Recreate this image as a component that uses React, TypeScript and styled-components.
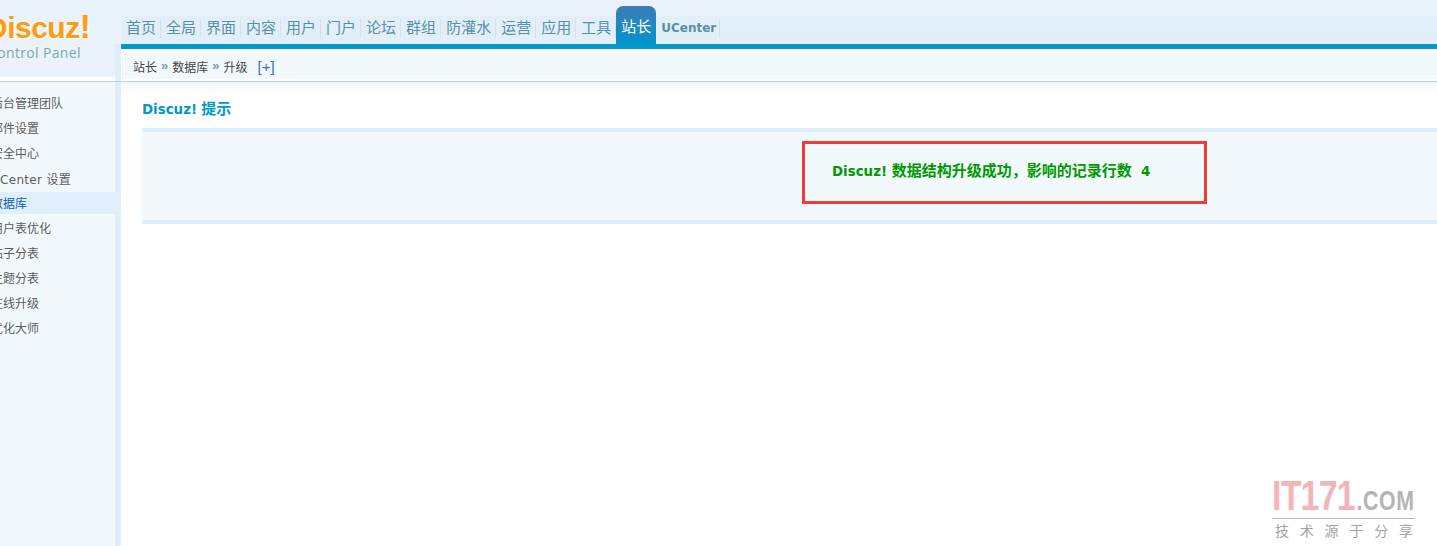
import React from 'react';
import styled, {createGlobalStyle} from 'styled-components';

const cjk = "'Noto Sans CJK SC', sans-serif";

const GlobalStyle = createGlobalStyle`
  html, body {
    margin: 0;
    padding: 0;
    background: #fff;
    overflow: hidden;
  }
  body {
    font-family: 'Liberation Sans', ${cjk};
  }
`;

const Page = styled.div`
  width: 1437px;
  height: 546px;
  display: grid;
  grid-template-columns: 121px 1fr;
  grid-template-rows: 82px 1fr;
  position: relative;
  overflow: hidden;
`;

const LogoArea = styled.div`
  position: relative;
  background: linear-gradient(#eaf3fb 0, #eaf3fb 77px, #fff 77px);
  border-bottom: 1px solid #b9d2de;
  box-sizing: border-box;
  overflow: hidden;

  &::after {
    content: '';
    position: absolute;
    top: 44px;
    right: 0;
    bottom: 0;
    width: 6px;
    background: #deeffb;
  }
`;

const LogoText = styled.div`
  margin: 11px 0 0 -14px;
  font-family: 'Liberation Sans', sans-serif;
  font-weight: 700;
  font-size: 30px;
  line-height: 34px;
  letter-spacing: -0.5px;
  color: #ff9c12;
  text-shadow: 1px 1px 1px #fff;
  white-space: nowrap;
`;

const LogoBang = styled.span`
  font-size: 33px;
  line-height: 30px;
`;

const LogoSub = styled.div`
  margin: 0 0 0 -12px;
  font-family: 'Open Sans', sans-serif;
  font-size: 14px;
  line-height: 16px;
  letter-spacing: 0.35px;
  color: #7ba6ba;
  white-space: nowrap;
`;

const TopArea = styled.div`
  display: flex;
  flex-direction: column;
  background: #fff;
  border-bottom: 1px solid #b9d2de;
  box-sizing: border-box;
`;

const Nav = styled.ul`
  list-style: none;
  margin: 0;
  padding: 0;
  height: 44px;
  box-sizing: border-box;
  display: flex;
  align-items: flex-end;
  background: linear-gradient(#eaf3fb 0, #eaf3fb 16px, #e2eff9 16px);
`;

const NavItem = styled.li<{$active?: boolean; $latin?: boolean}>`
  position: relative;
  height: ${p => (p.$active ? 38 : 28)}px;
  line-height: ${p => (p.$active ? 42 : 24)}px;
  padding: ${p => (p.$latin ? '0 4px 0 5px' : '0 5px')};
  font-family: ${p => (p.$latin ? "'DejaVu Sans', sans-serif" : 'inherit')};
  font-size: ${p => (p.$latin ? 12 : 15)}px;
  font-weight: ${p => (p.$latin ? 700 : 400)};
  color: ${p => (p.$active ? '#fff' : '#5890a8')};
  background: ${p => (p.$active ? 'linear-gradient(#3f7cb3, #0095cb)' : 'transparent')};
  border-radius: ${p => (p.$active ? '7px 7px 0 0' : 0)};
  white-space: nowrap;
  box-sizing: border-box;

  &::after {
    content: '';
    display: ${p => (p.$active ? 'none' : 'block')};
    position: absolute;
    top: 3px;
    right: 0;
    width: 1px;
    height: 19px;
    background: #d3e2ec;
  }
`;

const BlueRule = styled.div`
  height: 5px;
  background: #0099cc;
`;

const Crumbs = styled.div`
  margin: 4px 0 2px 1px;
  flex: 1;
  background: #f2f9fd;
  padding-left: 11px;
  display: flex;
  align-items: center;
  gap: 4px;
  font-size: 12px;
  color: #444;
`;

const CrumbSep = styled.span`
  color: #8494a8;
  font-size: 13px;
  font-weight: 700;
  line-height: 12px;
`;

const CrumbToggle = styled.span`
  color: #3a6fd0;
  font-size: 15px;
  margin-left: 6px;
`;

const Sidebar = styled.div`
  background: #f2f9fd;
  border-right: 6px solid #deeffb;
  box-shadow: 1px 0 0 #b9d2de;
  padding-top: 9px;
  overflow: hidden;
`;

const SideItem = styled.div<{$active?: boolean; $latin?: boolean}>`
  height: 25px;
  line-height: ${p => (p.$latin ? 29 : 27)}px;
  font-family: ${p => (p.$latin ? `'DejaVu Sans', ${cjk}` : 'inherit')};
  font-size: 12px;
  letter-spacing: ${p => (p.$latin ? '0.3px' : 0)};
  color: ${p => (p.$active ? '#0f5ea8' : '#5c5c5c')};
  background: ${p => (p.$active ? 'linear-gradient(#deeffb, #deeffb) 0 1px / 100% 22px no-repeat' : 'transparent')};
  text-indent: -9px;
  white-space: nowrap;
`;

const Main = styled.div`
  padding: 18px 0 0 21px;
  background: linear-gradient(#f0f6fa 0, #fff 12px);
`;

const Title = styled.h3`
  margin: 0;
  height: 28px;
  font-size: 15px;
  line-height: 18px;
  font-weight: 700;
  color: #0099cc;
`;

const Latin = styled.span`
  font-family: 'DejaVu Sans', sans-serif;
  font-size: 13.4px;
`;

const InfoBox = styled.div`
  height: 96px;
  box-sizing: border-box;
  border-top: 4px solid #deeffb;
  border-bottom: 4px solid #deeffb;
  background: #f2f9fd;
  padding: 9px 230px 0 660px;
`;

const Highlight = styled.div`
  width: 405px;
  height: 63px;
  box-sizing: border-box;
  border: 3px solid #f33a3a;
  padding-left: 27px;
  line-height: 53px;
  font-size: 15px;
  font-weight: 700;
  color: #009900;
  white-space: nowrap;
`;

const Watermark = styled.div`
  position: absolute;
  left: 1272px;
  top: 473px;
  width: 143px;
`;

const MarkTop = styled.div`
  height: 45px;
  border-bottom: 1px solid #b5b5b5;
  white-space: nowrap;
`;

const MarkWord = styled.div`
  display: inline-block;
  line-height: 45px;
  transform: scaleX(0.79);
  transform-origin: left center;
`;

const MarkRed = styled.span`
  font-family: 'Liberation Sans', sans-serif;
  font-weight: 700;
  font-size: 43px;
  letter-spacing: -1px;
  color: #f2b6b8;
`;

const MarkGrey = styled.span`
  font-family: 'Liberation Sans', sans-serif;
  font-weight: 700;
  font-size: 27px;
  letter-spacing: 0.8px;
  margin-left: 2px;
  color: #b4b4b4;
`;

const MarkSub = styled.div`
  display: flex;
  justify-content: space-between;
  padding: 3px 2px 0 3px;
  font-size: 14px;
  line-height: 18px;
  color: #a2a2a2;
`;

const navItems = ['首页', '全局', '界面', '内容', '用户', '门户', '论坛', '群组', '防灌水', '运营', '应用', '工具'];
const sideItems = ['后台管理团队', '邮件设置', '安全中心', 'UCenter 设置', '数据库', '用户表优化', '帖子分表', '主题分表', '在线升级', '优化大师'];

const App: React.FC = () => (
    <Page>
        <GlobalStyle/>
        <LogoArea>
            <LogoText>Discuz<LogoBang>!</LogoBang></LogoText>
            <LogoSub>Control Panel</LogoSub>
        </LogoArea>
        <TopArea>
            <Nav>
                {navItems.map(n => <NavItem key={n}>{n}</NavItem>)}
                <NavItem $active>站长</NavItem>
                <NavItem $latin>UCenter</NavItem>
            </Nav>
            <BlueRule/>
            <Crumbs>
                站长 <CrumbSep>»</CrumbSep> 数据库 <CrumbSep>»</CrumbSep> 升级 <CrumbToggle>[+]</CrumbToggle>
            </Crumbs>
        </TopArea>
        <Sidebar>
            {sideItems.map(s => (
                <SideItem key={s} $active={s === '数据库'} $latin={s.startsWith('UCenter')}>{s}</SideItem>
            ))}
        </Sidebar>
        <Main>
            <Title><Latin>Discuz!</Latin> 提示</Title>
            <InfoBox>
                <Highlight>
                    <Latin>Discuz! </Latin>数据结构升级成功，影响的记录行数<Latin>&nbsp; 4</Latin>
                </Highlight>
            </InfoBox>
        </Main>
        <Watermark>
            <MarkTop>
                <MarkWord><MarkRed>IT171</MarkRed><MarkGrey>.COM</MarkGrey></MarkWord>
            </MarkTop>
            <MarkSub>
                {['技', '术', '源', '于', '分', '享'].map(c => <span key={c}>{c}</span>)}
            </MarkSub>
        </Watermark>
    </Page>
);

export default App;
